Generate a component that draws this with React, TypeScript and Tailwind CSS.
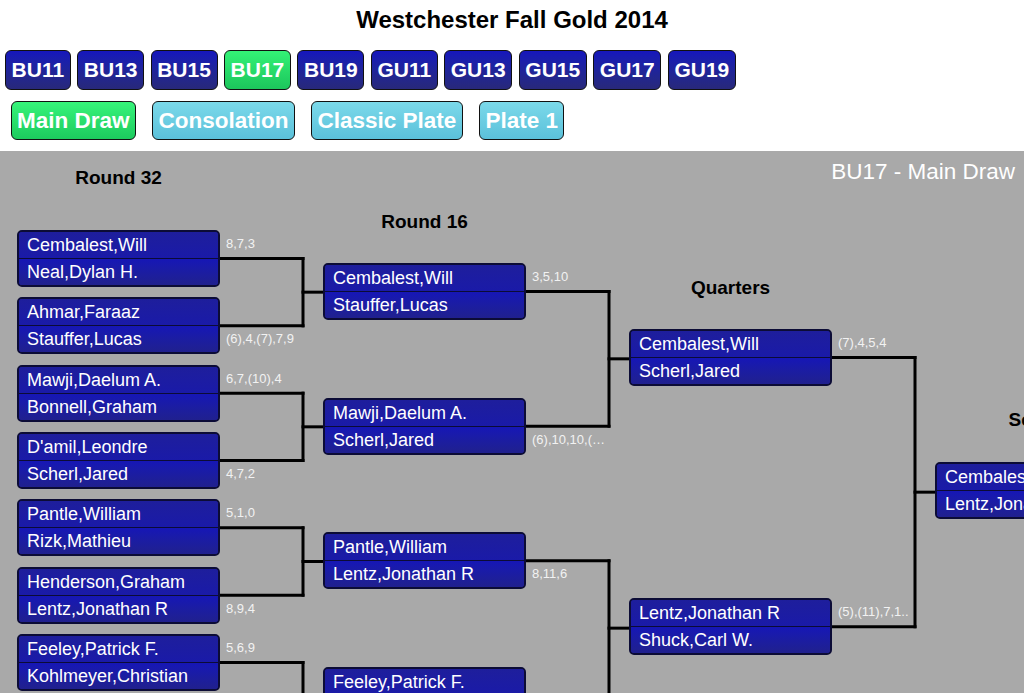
import React from "react";

type Match = { a: string; b: string; s?: string; w?: 0 | 1 };

const rounds: Match[][] = [
  [
    { a: "Cembalest,Will", b: "Neal,Dylan H.", s: "8,7,3", w: 0 },
    { a: "Ahmar,Faraaz", b: "Stauffer,Lucas", s: "(6),4,(7),7,9", w: 1 },
    { a: "Mawji,Daelum A.", b: "Bonnell,Graham", s: "6,7,(10),4", w: 0 },
    { a: "D'amil,Leondre", b: "Scherl,Jared", s: "4,7,2", w: 1 },
    { a: "Pantle,William", b: "Rizk,Mathieu", s: "5,1,0", w: 0 },
    { a: "Henderson,Graham", b: "Lentz,Jonathan R", s: "8,9,4", w: 1 },
    { a: "Feeley,Patrick F.", b: "Kohlmeyer,Christian", s: "5,6,9", w: 0 },
    { a: "", b: "" },
  ],
  [
    { a: "Cembalest,Will", b: "Stauffer,Lucas", s: "3,5,10", w: 0 },
    { a: "Mawji,Daelum A.", b: "Scherl,Jared", s: "(6),10,10,(…", w: 1 },
    { a: "Pantle,William", b: "Lentz,Jonathan R", s: "8,11,6", w: 1 },
    { a: "Feeley,Patrick F.", b: "" },
  ],
  [
    { a: "Cembalest,Will", b: "Scherl,Jared", s: "(7),4,5,4", w: 0 },
    { a: "Lentz,Jonathan R", b: "Shuck,Carl W.", s: "(5),(11),7,1..", w: 0 },
  ],
  [{ a: "Cembalest,Will", b: "Lentz,Jonathan R" }],
];

const COLS = [17, 323, 629, 935];
const TOPS = [79, 112, 178, 311];
const BASE = 67.33;
const BOX_W = 203;
const BOX_H = 57;
const DIV = 28.5;

const labels = [
  { t: "Round 32", x: 118.5, y: 27 },
  { t: "Round 16", x: 424.5, y: 71 },
  { t: "Quarters", x: 730.5, y: 137 },
  { t: "Semis", x: 1036.5, y: 269 },
];

const top = (r: number, i: number) => TOPS[r] + BASE * Math.pow(2, r) * i;

function Box({ m }: { m: Match }) {
  return (
    <div className="flex h-full w-full flex-col overflow-hidden rounded-[5px] border-2 border-[#0c0c36] bg-[#1c1ca2]">
      <div className="flex flex-1 items-center bg-linear-to-b from-[#1e1e9c] to-[#1a1aa8] px-[8px] text-[18px] leading-none text-white">
        {m.a}
      </div>
      <div className="flex flex-1 items-center border-t-[1.5px] border-[#0c0c36] bg-linear-to-b from-[#1616b6] to-[#20208e] px-[8px] text-[18px] leading-none text-white">
        {m.b}
      </div>
    </div>
  );
}

function Bracket() {
  const lines: React.ReactNode[] = [];
  rounds.forEach((ms, r) => {
    const right = COLS[r] + BOX_W;
    const vx = right + 83;
    const nextLeft = COLS[r] + 306;
    ms.forEach((_, i) => {
      const y = top(r, i) + DIV;
      lines.push(<line key={`h${r}-${i}`} x1={right} y1={y} x2={vx} y2={y} />);
      if (i % 2 === 0) {
        const y2 = top(r, i + 1) + DIV;
        lines.push(<line key={`v${r}-${i}`} x1={vx} y1={y} x2={vx} y2={y2} />);
        const mid = (y + y2) / 2;
        lines.push(<line key={`n${r}-${i}`} x1={vx} y1={mid} x2={nextLeft} y2={mid} />);
      }
    });
  });

  return (
    <div className="relative h-[542px] w-full overflow-hidden bg-[#a9a9a9]">
      <div className="absolute right-[9px] top-[8px] text-[22.5px] leading-[26px] text-white">BU17 - Main Draw</div>
      {labels.map((l) => (
        <div
          key={l.t}
          className="absolute w-[160px] -translate-x-1/2 -translate-y-1/2 text-center text-[19px] font-bold leading-[22px] text-black"
          style={{ left: l.x, top: l.y }}
        >
          {l.t}
        </div>
      ))}
      <svg className="absolute left-0 top-0" width={1024} height={542} stroke="#000" strokeWidth={3} strokeLinecap="square">
        {lines}
      </svg>
      {rounds.map((ms, r) =>
        ms.map((m, i) => {
          const t = top(r, i);
          if (t > 545) return null;
          return (
            <React.Fragment key={`${r}-${i}`}>
              <div className="absolute" style={{ left: COLS[r], top: t, width: BOX_W, height: BOX_H }}>
                <Box m={m} />
              </div>
              {m.s && (
                <div
                  className="absolute whitespace-nowrap text-[13px] leading-[16px] text-[#f2f2f2]"
                  style={{ left: COLS[r] + BOX_W + 6, top: t + (m.w === 0 ? 14 : 42) - 8 }}
                >
                  {m.s}
                </div>
              )}
            </React.Fragment>
          );
        })
      )}
    </div>
  );
}

const divisions = ["BU11", "BU13", "BU15", "BU17", "BU19", "GU11", "GU13", "GU15", "GU17", "GU19"];
const draws = ["Main Draw", "Consolation", "Classic Plate", "Plate 1"];

export default function App() {
  return (
    <div className="h-[693px] w-[1024px] overflow-hidden bg-white font-['Liberation_Sans',Arial,sans-serif]">
      <div className="flex h-[40px] items-center justify-center text-[24px] font-bold text-black">
        Westchester Fall Gold 2014
      </div>
      <div className="mt-[10px] flex h-[40px] gap-[6.5px] pl-[5px]">
        {divisions.map((d) => (
          <div
            key={d}
            className={
              d === "BU17"
                ? "flex items-center rounded-[6px] border-[1.5px] border-[#111] bg-linear-to-b from-[#33f276] to-[#1cc65c] px-[5.6px] text-[21px] font-bold text-white"
                : "flex items-center rounded-[6px] border-[1.5px] border-[#111] bg-linear-to-b from-[#1616bc] to-[#28287a] px-[5.6px] text-[21px] font-bold text-white"
            }
          >
            {d}
          </div>
        ))}
      </div>
      <div className="mt-[11px] flex h-[39px] gap-[16px] pl-[10.5px]">
        {draws.map((d) => (
          <div
            key={d}
            className={
              d === "Main Draw"
                ? "flex items-center rounded-[6px] border-[1.5px] border-[#111] bg-linear-to-b from-[#36f47a] to-[#1ccb5e] px-[5.5px] text-[22.5px] font-bold text-white"
                : "flex items-center rounded-[6px] border-[1.5px] border-[#111] bg-linear-to-b from-[#7bd9ea] to-[#5bc1da] px-[5.5px] text-[22.5px] font-bold text-white"
            }
          >
            {d}
          </div>
        ))}
      </div>
      <div className="mt-[11px]">
        <Bracket />
      </div>
    </div>
  );
}
